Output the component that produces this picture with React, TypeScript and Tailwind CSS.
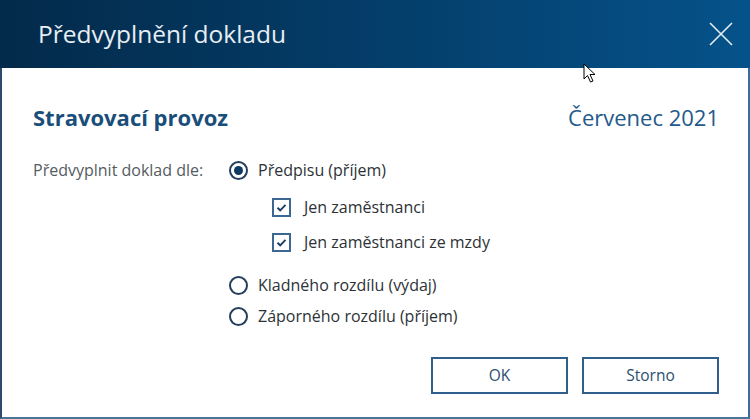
import React from "react";

function Radio({ checked }: { checked?: boolean }) {
  return (
    <span className="flex h-[19px] w-[19px] shrink-0 items-center justify-center rounded-full border-2 border-[#243f5c] bg-white">
      {checked && <span className="h-[9px] w-[9px] rounded-full bg-[#0d3a63]" />}
    </span>
  );
}

function Check() {
  return (
    <span className="flex h-[19px] w-[19px] shrink-0 items-center justify-center border-2 border-[#3b6893] bg-white">
      <svg width="13" height="13" viewBox="0 0 13 13">
        <path d="M2.5 6.8 L5.2 9.3 L10.5 3.8" fill="none" stroke="#1a3d63" strokeWidth="1.9" />
      </svg>
    </span>
  );
}

export default function App() {
  return (
    <div
      className="flex h-[419px] w-[750px] flex-col bg-white"
      style={{ fontFamily: '"Open Sans", "Noto Sans", sans-serif' }}
    >
      <div className="relative flex h-[68px] shrink-0 items-center justify-between bg-gradient-to-r from-[#032a4a] to-[#05528a] pl-[38px] pr-[18px]">
        <span className="pb-[1px] text-[24.5px] leading-[30px] text-[#e8eef4]">Předvyplnění dokladu</span>
        <svg width="26" height="26" viewBox="0 0 26 26" className="mr-[-2px]">
          <path d="M2 2 L24 24 M24 2 L2 24" stroke="#e6edf3" strokeWidth="1.6" />
        </svg>
      </div>
      <div className="relative flex flex-1 flex-col border-b-2 border-l-2 border-r-2 border-b-[#4a7595] border-l-[#2b4c6b] border-r-[#3b6d9c] pl-[31px] pr-[29px]">
        <svg width="16" height="22" viewBox="0 0 16 22" className="absolute left-[581px] top-[-5px]">
          <path d="M1 1 L1 16 L4.5 12.5 L7.5 19 L10 18 L7 11.5 L12 11.5 Z" fill="#fff" stroke="#000" strokeWidth="1" />
        </svg>
        <div className="mt-[34px] flex h-[30px] items-center justify-between">
          <span className="text-[22px] font-bold leading-[30px] text-[#1a4e7a]">Stravovací provoz</span>
          <span className="text-[22px] leading-[30px] text-[#24598a]">Červenec 2021</span>
        </div>
        <div className="mt-[27px] flex text-[16px] leading-[22px]">
          <div className="w-[196px] text-[#555b61]">Předvyplnit doklad dle:</div>
          <div className="flex flex-col text-[#2d3236]">
            <div className="flex h-[22px] items-center gap-[10px]">
              <Radio checked />
              <span>Předpisu (příjem)</span>
            </div>
            <div className="ml-[43px] mt-[15px] flex h-[22px] items-center gap-[13px]">
              <Check />
              <span>Jen zaměstnanci</span>
            </div>
            <div className="ml-[43px] mt-[13px] flex h-[22px] items-center gap-[13px]">
              <Check />
              <span>Jen zaměstnanci ze mzdy</span>
            </div>
            <div className="mt-[21px] flex h-[22px] items-center gap-[10px]">
              <Radio />
              <span>Kladného rozdílu (výdaj)</span>
            </div>
            <div className="mt-[9px] flex h-[22px] items-center gap-[10px]">
              <Radio />
              <span>Záporného rozdílu (příjem)</span>
            </div>
          </div>
        </div>
        <div className="mt-[30px] flex justify-end gap-[14px]">
          <button className="h-[37px] w-[137px] border-2 border-[#2f5f8a] bg-white text-[15.5px] text-[#2d4f6f]">OK</button>
          <button className="h-[37px] w-[137px] border-2 border-[#2f5f8a] bg-white text-[15.5px] text-[#2d4f6f]">Storno</button>
        </div>
      </div>
    </div>
  );
}
